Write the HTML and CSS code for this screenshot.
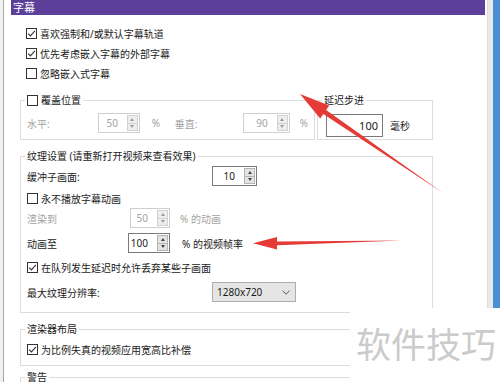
FILE: index.html
```html
<!DOCTYPE html>
<html lang="zh">
<head>
  <meta charset="UTF-8" />
  <title>字幕</title>
  <link rel="stylesheet" href="styles.css">
</head>
<body>

<div class="screen">
  <div class="side"></div>
  <div class="page">
    <div class="title">字幕</div>
    <div class="body">
      <div class="check">
        <svg class="cb" viewBox="0 0 11 11"><rect x="0.5" y="0.5" width="10" height="10" /><path d="M2.2 5.6 L4.4 7.9 L8.9 2.8" /></svg>
        喜欢强制和/或默认字幕轨道
      </div>
      <div class="check">
        <svg class="cb" viewBox="0 0 11 11"><rect x="0.5" y="0.5" width="10" height="10" /><path d="M2.2 5.6 L4.4 7.9 L8.9 2.8" /></svg>
        优先考虑嵌入字幕的外部字幕
      </div>
      <div class="check">
        <svg class="cb" viewBox="0 0 11 11"><rect x="0.5" y="0.5" width="10" height="10" /></svg>
        忽略嵌入式字幕
      </div>

      <div class="pair">
        <fieldset class="group pos">
          <legend>
            <svg class="cb" viewBox="0 0 11 11"><rect x="0.5" y="0.5" width="10" height="10" /></svg>
            覆盖位置
          </legend>
          <div class="row off">
            <span class="lbl-h">水平:</span>
            <span class="spin w42"><span class="val">50</span><span class="btns"><i class="up"></i><i class="dn"></i></span></span>
            <span class="unit-h">%</span>
            <span class="lbl-v">垂直:</span>
            <span class="spin w47"><span class="val">90</span><span class="btns"><i class="up"></i><i class="dn"></i></span></span>
            <span class="unit-v">%</span>
          </div>
        </fieldset>
        <fieldset class="group delay">
          <legend>延迟步进</legend>
          <div class="row delay-row">
            <span class="num">100</span>
            <span class="ms">毫秒</span>
          </div>
        </fieldset>
      </div>

      <fieldset class="group tex">
        <legend>纹理设置 (请重新打开视频来查看效果)</legend>
        <div class="row r1">
          <span class="lbl-long">缓冲子画面:</span>
          <span class="spin w45"><span class="val">10</span><span class="btns"><i class="up"></i><i class="dn"></i></span></span>
        </div>
        <div class="check in r2">
          <svg class="cb" viewBox="0 0 11 11"><rect x="0.5" y="0.5" width="10" height="10" /></svg>
          永不播放字幕动画
        </div>
        <div class="row off">
          <span class="lbl-render">渲染到</span>
          <span class="spin w40"><span class="val">50</span><span class="btns"><i class="up"></i><i class="dn"></i></span></span>
          <span class="unit-render">% 的动画</span>
        </div>
        <div class="row r4">
          <span class="lbl-anim">动画至</span>
          <span class="spin w42"><span class="val">100</span><span class="btns"><i class="up"></i><i class="dn"></i></span></span>
          <span class="unit-anim">% 的视频帧率</span>
        </div>
        <div class="check in r5">
          <svg class="cb" viewBox="0 0 11 11"><rect x="0.5" y="0.5" width="10" height="10" /><path d="M2.2 5.6 L4.4 7.9 L8.9 2.8" /></svg>
          在队列发生延迟时允许丢弃某些子画面
        </div>
        <div class="row r6">
          <span class="lbl-long">最大纹理分辨率:</span>
          <span class="combo">1280x720
            <svg class="chev" viewBox="0 0 8 5"><path d="M0.5 0.8 L4 4.2 L7.5 0.8" /></svg>
          </span>
        </div>
      </fieldset>

      <fieldset class="group lay">
        <legend>渲染器布局</legend>
        <div class="check in r-lay">
          <svg class="cb" viewBox="0 0 11 11"><rect x="0.5" y="0.5" width="10" height="10" /><path d="M2.2 5.6 L4.4 7.9 L8.9 2.8" /></svg>
          为比例失真的视频应用宽高比补偿
        </div>
      </fieldset>

      <fieldset class="group warn">
        <legend>警告</legend>
      </fieldset>
    </div>
  </div>
  <div class="scroll"></div>
  <div class="edge"></div>
</div>

<div class="mark">软件技巧</div>

<svg class="arrows" viewBox="0 0 500 382">
  <polygon points="443,193 323.3,114.1 320.2,118.6 300,94 329.2,105.4 326.1,109.9" />
  <polygon points="402,240.6 277,245.2 277,249.5 253,243.2 277,237 277,241.4" />
</svg>

</body>
</html>
```

FILE: styles.css
```css
* {
  box-sizing: border-box;
}

body {
  margin: 0;
  width: 500px;
  height: 382px;
  overflow: hidden;
  position: relative;
  background: #fff;
  font-family: "Noto Sans", "Noto Sans CJK SC", sans-serif;
  font-size: 10px;
  color: #1a1a1a;
}

.screen {
  display: flex;
  height: 382px;
}

.side {
  width: 4px;
  background: #f0f0f0;
  border-right: 1px solid #a9a9a9;
}

.page {
  flex: 1;
  padding: 0 2px 0 7px;
  overflow: hidden;
}

.scroll {
  width: 6px;
  background: #e9e9e9;
  border-left: 1px solid #dcdcdc;
}

.edge {
  width: 7px;
  background: #4a8fd6;
}

.title {
  height: 15px;
  line-height: 15px;
  background: #5c3f98;
  color: #fff;
  font-size: 11px;
  padding-left: 2px;
}

.body {
  padding: 8px 0 0 9px;
}

/* checkboxes */
.check {
  display: flex;
  align-items: center;
  height: 20px;
  padding-left: 6px;
}

.check.in {
  padding-left: 0;
}

.cb {
  width: 11px;
  height: 11px;
  margin-right: 3px;
  flex: none;
}

.cb rect {
  fill: #fff;
  stroke: #333;
}

.cb path {
  fill: none;
  stroke: #333;
  stroke-width: 1.1;
}

/* group boxes */
.group {
  border: 1px solid #dcdcdc;
  margin: 0;
  padding: 0 6px;
  min-width: 0;
  width: 413px;
}

.group legend {
  display: flex;
  align-items: center;
  height: 14px;
  line-height: 14px;
  padding: 0 2px;
  margin-left: -2px;
}

.pair {
  display: flex;
  gap: 2px;
  margin-top: 10px;
  width: 413px;
}

.pos {
  width: 295px;
  padding-bottom: 6px;
}

.delay {
  width: 116px;
  padding-bottom: 2px;
}

.row {
  display: flex;
  align-items: center;
  height: 20px;
}

.pos .row {
  margin-top: 6px;
}

.off {
  color: #a3a3a3;
}

.lbl-h { width: 71px; }
.unit-h { width: 35px; padding-left: 12px; }
.lbl-v { width: 68px; }
.unit-v { padding-left: 10px; }

.delay-row {
  height: 23px;
  margin-top: 7px;
}

.num {
  width: 57px;
  height: 23px;
  margin-left: 2px;
  border: 1px solid #7a7a7a;
  text-align: right;
  padding-right: 4px;
  line-height: 21px;
  font-size: 11px;
}

.ms {
  margin-left: 7px;
}

/* spin boxes */
.spin {
  display: flex;
  height: 20px;
  flex: none;
  border: 1px solid #7a7a7a;
  background: #fff;
}

.off .spin {
  border-color: #cfcfcf;
}

.w40 { width: 40px; }
.w42 { width: 42px; }
.w45 { width: 45px; }
.w47 { width: 47px; }

.spin .val {
  flex: 1;
  text-align: right;
  padding-right: 9px;
  line-height: 18px;
}

.spin .btns {
  display: flex;
  flex-direction: column;
  width: 12px;
  padding: 1px 1px 1px 0;
}

.spin .btns i {
  flex: 1;
  display: flex;
  align-items: center;
  justify-content: center;
  background: #e4e4e4;
  border: 1px solid #b4b4b4;
}

.spin .btns i + i {
  border-top: none;
}

.off .spin .btns i {
  background: #eeeeee;
  border-color: #d2d2d2;
}

.up::after,
.dn::after {
  content: "";
  border-left: 2.5px solid transparent;
  border-right: 2.5px solid transparent;
}

.up::after {
  border-bottom: 3px solid #444;
}

.dn::after {
  border-top: 3px solid #444;
}

.off .up::after { border-bottom-color: #9d9d9d; }
.off .dn::after { border-top-color: #9d9d9d; }

/* texture group */
.tex {
  margin-top: 9px;
  padding-bottom: 10px;
}

.r1 { margin-top: 3px; }
.r2 { margin-top: 2px; }
.r4 { margin-top: 5px; }
.r5 { margin-top: 4px; }
.r6 { margin-top: 5px; }

.lbl-long { width: 185px; }
.lbl-render { width: 103px; }
.unit-render { padding-left: 10px; }
.lbl-anim { width: 101px; }
.unit-anim { padding-left: 12px; }

.combo {
  display: flex;
  align-items: center;
  justify-content: space-between;
  width: 84px;
  height: 20px;
  padding: 0 5px 0 4px;
  background: #e5e5e5;
  border: 1px solid #adadad;
}

.chev {
  width: 8px;
  height: 5px;
}

.chev path {
  fill: none;
  stroke: #555;
}

.lay {
  margin-top: 9px;
  padding-bottom: 6px;
}

.r-lay {
  margin-top: 3px;
}

.warn {
  margin-top: 4px;
  height: 12px;
}

/* overlays */
.mark {
  position: absolute;
  left: 350px;
  top: 308px;
  width: 150px;
  height: 74px;
  background: #fff;
  color: #cbcbcb;
  font-family: "Noto Sans CJK SC", sans-serif;
  font-size: 35px;
  line-height: 35px;
  padding: 17px 0 0 6px;
  white-space: nowrap;
}

.arrows {
  position: absolute;
  left: 0;
  top: 0;
  width: 500px;
  height: 382px;
  pointer-events: none;
}

.arrows polygon {
  fill: #e53a35;
}
```
